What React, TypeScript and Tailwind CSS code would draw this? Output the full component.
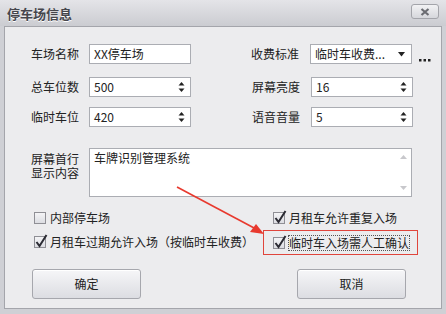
import React from "react";

const font = { fontFamily: '"Noto Sans CJK SC", "Noto Sans", sans-serif' };

function Spin({ value }: { value: string }) {
  return (
    <div className="flex items-center w-[102px] h-[20px] bg-white border border-[#abadb3] pl-[4px] pr-[5px]">
      <span className="flex-1 text-[12px] text-[#222] leading-none">{value}</span>
      <svg width="7" height="14" viewBox="0 0 7 14">
        <path d="M3.5 2 L6.5 5.5 L0.5 5.5 Z" fill="#222" />
        <path d="M3.5 12 L6.5 8.5 L0.5 8.5 Z" fill="#222" />
      </svg>
    </div>
  );
}

function Box({ checked }: { checked: boolean }) {
  return (
    <div className="w-[12px] h-[12px] shrink-0 border border-[#8f8f95] bg-gradient-to-b from-[#f4f4f6] to-[#dcdde2] relative">
      {checked && (
        <svg className="absolute left-[0px] top-[-3px]" width="13" height="14" viewBox="0 0 13 14">
          <path d="M1.5 8 L4.5 12 L11.5 1" stroke="#2b2b33" strokeWidth="2" fill="none" />
        </svg>
      )}
    </div>
  );
}

function Check({ checked, label }: { checked: boolean; label: string }) {
  return (
    <div className="flex items-center gap-[4px]">
      <Box checked={checked} />
      <span className="text-[12px] text-[#222] leading-none">{label}</span>
    </div>
  );
}

function Btn({ label }: { label: string }) {
  return (
    <button className="w-[109px] h-[30px] rounded-[3px] border border-[#a6a7ad] bg-gradient-to-b from-[#f6f6f8] to-[#dcdde2] text-[12px] text-[#222] shadow-[inset_0_1px_0_#fff]">
      {label}
    </button>
  );
}

export default function App() {
  return (
    <div style={font} className="w-[446px] h-[314px] bg-[#cfd0d5] flex flex-col relative overflow-hidden">
      {/* title bar */}
      <div className="h-[26px] shrink-0 flex items-center justify-between pl-[7px] pr-[7px] bg-gradient-to-b from-[#e4e4e8] to-[#cbccd1]">
        <span className="text-[13px] font-bold text-[#45464c] [text-shadow:0_1px_0_#fff] leading-none">停车场信息</span>
        <div className="w-[28px] h-[15px] rounded-[3px] border border-[#a3a4aa] bg-gradient-to-b from-[#f2f2f4] to-[#d6d7dc] flex items-center justify-center mb-[3px]">
          <svg width="10" height="8" viewBox="0 0 10 8">
            <path d="M1.5 1 L8.5 7 M8.5 1 L1.5 7" stroke="#6b6c72" strokeWidth="2.2" />
          </svg>
        </div>
      </div>

      {/* body */}
      <div className="flex-1 px-[4px] pb-[5px]">
        <div className="h-full border border-[#a4a5ab] bg-[#ececee] pt-[17px] pl-[26px] text-[12px] text-[#222]">
          {/* row 1 */}
          <div className="flex items-center h-[20px]">
            <span className="w-[58px]">车场名称</span>
            <div className="w-[102px] h-[20px] bg-white border border-[#abadb3] pl-[4px] flex items-center leading-none">XX停车场</div>
            <span className="w-[59px] ml-[60px]">收费标准</span>
            <div className="w-[102px] h-[20px] bg-white border border-[#abadb3] pl-[4px] pr-[6px] flex items-center">
              <span className="flex-1 leading-none">临时车收费...</span>
              <svg width="7" height="5" viewBox="0 0 7 5">
                <path d="M0 0 L7 0 L3.5 4.5 Z" fill="#222" />
              </svg>
            </div>
            <svg className="ml-[7px] mt-[12px]" width="12" height="3" viewBox="0 0 12 3">
              <rect x="0" y="0" width="2.5" height="2.5" fill="#222" />
              <rect x="4.5" y="0" width="2.5" height="2.5" fill="#222" />
              <rect x="9" y="0" width="2.5" height="2.5" fill="#222" />
            </svg>
          </div>

          {/* row 2 */}
          <div className="flex items-center h-[20px] mt-[13px]">
            <span className="w-[58px]">总车位数</span>
            <Spin value="500" />
            <span className="w-[59px] ml-[61px]">屏幕亮度</span>
            <Spin value="16" />
          </div>

          {/* row 3 */}
          <div className="flex items-center h-[20px] mt-[10px]">
            <span className="w-[58px]">临时车位</span>
            <Spin value="420" />
            <span className="w-[59px] ml-[61px]">语音音量</span>
            <Spin value="5" />
          </div>

          {/* textarea */}
          <div className="flex mt-[21px]">
            <div className="w-[58px] pt-[5px] flex flex-col gap-[2px]">
              <span className="leading-[12px]">屏幕首行</span>
              <span className="leading-[12px]">显示内容</span>
            </div>
            <div className="w-[323px] h-[49px] bg-white border border-[#abadb3] flex">
              <span className="flex-1 pl-[4px] pt-[1px] leading-[16px]">车牌识别管理系统</span>
              <div className="w-[16px] flex flex-col justify-between items-center py-[6px]">
                <svg width="7" height="4" viewBox="0 0 7 4">
                  <path d="M3.5 0 L7 4 L0 4 Z" fill="#c8c8cc" />
                </svg>
                <svg width="7" height="4" viewBox="0 0 7 4">
                  <path d="M3.5 4 L7 0 L0 0 Z" fill="#c8c8cc" />
                </svg>
              </div>
            </div>
          </div>

          {/* checks */}
          <div className="flex mt-[15px] pl-[3px]">
            <div className="w-[239px] flex flex-col gap-[12px]">
              <Check checked={false} label="内部停车场" />
              <Check checked label="月租车过期允许入场（按临时车收费）" />
            </div>
            <div className="flex flex-col gap-[6px]">
              <Check checked label="月租车允许重复入场" />
              <div className="w-[155px] h-[25px] -ml-[10px] border border-[#e0453c] flex items-center pl-[9px]">
                <div className="flex items-center gap-[3px]">
                  <Box checked />
                  <span className="leading-none border border-dotted border-[#555] px-[0px] py-[1px]">临时车入场需人工确认</span>
                </div>
              </div>
            </div>
          </div>

          {/* buttons */}
          <div className="flex mt-[14px] pl-[1px]">
            <Btn label="确定" />
            <div className="ml-[156px]">
              <Btn label="取消" />
            </div>
          </div>
        </div>
      </div>

      {/* red arrow annotation */}
      <svg className="absolute left-0 top-0 pointer-events-none" width="446" height="314">
        <line x1="177" y1="187" x2="256" y2="229" stroke="#e8392e" strokeWidth="1.6" />
        <path d="M264 234 L250 232 L256 224 Z" fill="#e8392e" />
      </svg>
    </div>
  );
}
